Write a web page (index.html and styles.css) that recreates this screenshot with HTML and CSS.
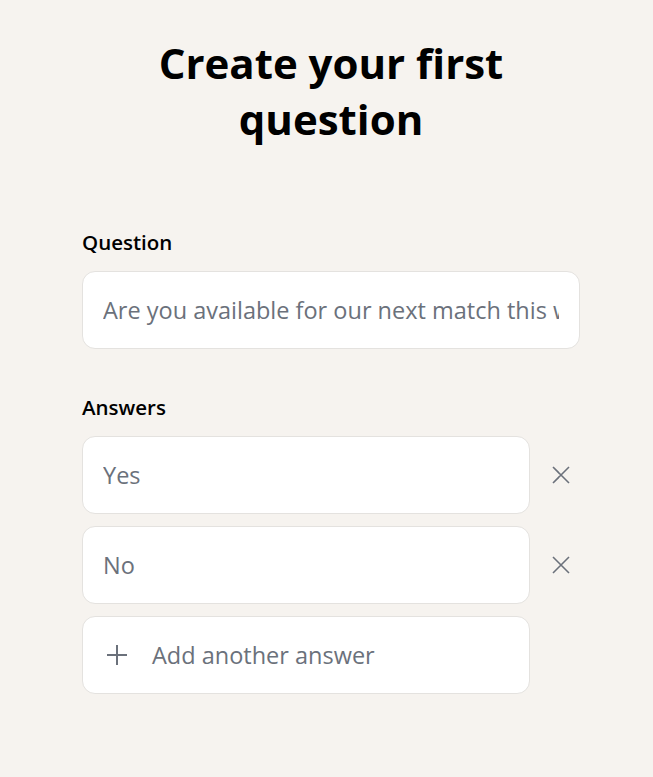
FILE: index.html
```html
<!DOCTYPE html>
<html lang="en">
<head>
<meta charset="utf-8">
<title>Create your first question</title>
<link rel="stylesheet" href="styles.css">
</head>
<body>
<main class="page">
  <h1 class="title">Create your first question</h1>
  <section class="field field-question">
    <label class="label" for="q">Question</label>
    <div class="input-box wide"><input id="q" class="input" type="text" placeholder="Are you available for our next match this weekend?"></div>
  </section>
  <section class="field">
    <div class="label">Answers</div>
    <div class="answers">
      <div class="answer-row">
        <div class="input-box"><input class="input" type="text" placeholder="Yes"></div>
        <button class="remove" aria-label="Remove answer">
          <svg width="18" height="18" viewBox="0 0 18 18"><path d="M1 1 L17 17 M17 1 L1 17" stroke="currentColor" stroke-width="1.6" fill="none"/></svg>
        </button>
      </div>
      <div class="answer-row">
        <div class="input-box"><input class="input" type="text" placeholder="No"></div>
        <button class="remove" aria-label="Remove answer">
          <svg width="18" height="18" viewBox="0 0 18 18"><path d="M1 1 L17 17 M17 1 L1 17" stroke="currentColor" stroke-width="1.6" fill="none"/></svg>
        </button>
      </div>
      <div class="answer-row">
        <button class="add">
          <svg width="20" height="20" viewBox="0 0 20 20"><path d="M10 0 V20 M0 10 H20" stroke="currentColor" stroke-width="2" fill="none"/></svg>
          <span>Add another answer</span>
        </button>
      </div>
    </div>
  </section>
</main>
</body>
</html>
```
FILE: styles.css
```css
html, body {
  margin: 0;
  padding: 0;
  background: #f6f3ef;
}
body {
  font-family: "Open Sans", "Noto Sans", sans-serif;
  color: #000;
}
.page {
  width: 498px;
  margin-left: 82px;
  padding-top: 35px;
}
.title {
  margin: 0 0 81px;
  text-align: center;
  font-size: 42px;
  line-height: 56px;
  font-weight: 700;
  padding: 0 40px;
}
.field-question {
  margin-bottom: 44px;
}
.label {
  display: block;
  font-size: 20.5px;
  font-weight: 600;
  line-height: 28px;
  margin-bottom: 15px;
}
.input-box {
  width: 448px;
  height: 78px;
  box-sizing: border-box;
  background: #fff;
  border: 1px solid #e4e2df;
  border-radius: 13px;
  display: flex;
  align-items: center;
  padding: 0 20px;
}
.input-box.wide {
  width: 498px;
}
.input {
  border: none;
  outline: none;
  background: transparent;
  width: 100%;
  font-family: inherit;
  font-size: 23.5px;
  color: #222;
  padding: 0;
}
.input::placeholder {
  color: #6b717b;
}
.answers {
  display: flex;
  flex-direction: column;
  gap: 12px;
}
.answer-row {
  display: flex;
  align-items: center;
  gap: 22px;
}
.remove {
  border: none;
  background: none;
  padding: 0;
  color: #6b717b;
  width: 18px;
  height: 18px;
  display: flex;
}
.add {
  width: 448px;
  height: 78px;
  box-sizing: border-box;
  background: #fff;
  border: 1px solid #e4e2df;
  border-radius: 13px;
  display: flex;
  align-items: center;
  gap: 25px;
  padding: 0 24px;
  font-family: inherit;
  font-size: 23.5px;
  color: #6b717b;
}
```
